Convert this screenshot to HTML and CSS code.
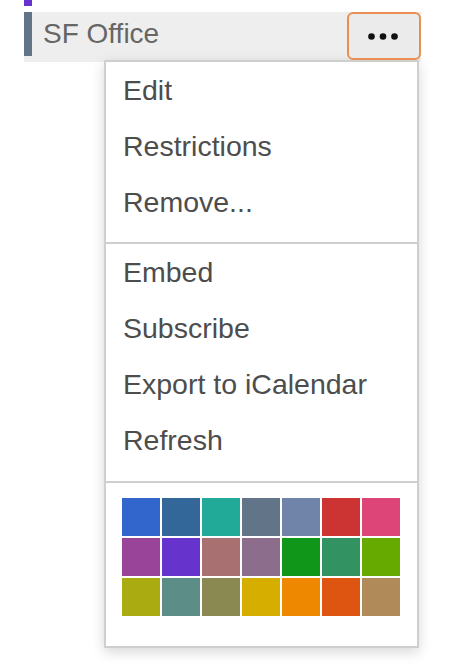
FILE: index.html
```html
<!DOCTYPE html>
<html lang="en">
<head>
<meta charset="utf-8">
<title>SF Office</title>
<link rel="stylesheet" href="styles.css">
</head>
<body>
<div class="page">
  <div class="prev-tick"></div>
  <div class="cal-row">
    <div class="cal-label">SF Office</div>
    <button class="more-btn" type="button" aria-label="More">
      <svg width="30" height="7" viewBox="0 0 30 7"><circle cx="3.5" cy="3.5" r="3.3" fill="#111"/><circle cx="15" cy="3.5" r="3.3" fill="#111"/><circle cx="26.5" cy="3.5" r="3.3" fill="#111"/></svg>
    </button>
  </div>
  <div class="menu">
    <ul class="menu-group">
      <li class="menu-item">Edit</li>
      <li class="menu-item">Restrictions</li>
      <li class="menu-item">Remove...</li>
    </ul>
    <ul class="menu-group menu-group-sep">
      <li class="menu-item">Embed</li>
      <li class="menu-item">Subscribe</li>
      <li class="menu-item">Export to iCalendar</li>
      <li class="menu-item">Refresh</li>
    </ul>
    <div class="palette">
      <span class="sw c1"></span><span class="sw c2"></span><span class="sw c3"></span><span class="sw c4"></span><span class="sw c5"></span><span class="sw c6"></span><span class="sw c7"></span>
      <span class="sw c8"></span><span class="sw c9"></span><span class="sw c10"></span><span class="sw c11"></span><span class="sw c12"></span><span class="sw c13"></span><span class="sw c14"></span>
      <span class="sw c15"></span><span class="sw c16"></span><span class="sw c17"></span><span class="sw c18"></span><span class="sw c19"></span><span class="sw c20"></span><span class="sw c21"></span>
    </div>
  </div>
</div>
</body>
</html>
```
FILE: styles.css
```css
html, body {
  margin: 0;
  padding: 0;
  background: #fff;
}
body {
  font-family: "Liberation Sans", Arial, Helvetica, sans-serif;
}
.page {
  position: relative;
  width: 454px;
  height: 670px;
}
.prev-tick {
  margin-left: 24px;
  width: 8px;
  height: 6px;
  background: #6633cc;
  margin-bottom: 6px;
}
.cal-row {
  margin-left: 24px;
  width: 397px;
  height: 50px;
  background: #eeeeee;
  display: flex;
  align-items: flex-start;
}
.cal-label {
  flex: 1;
  height: 44px;
  border-left: 8px solid #627487;
  padding-left: 11px;
  font-size: 28px;
  line-height: 44px;
  color: #666666;
}
.more-btn {
  box-sizing: border-box;
  width: 74px;
  height: 48px;
  margin: 0;
  padding: 0;
  border: 2px solid #ea8f52;
  border-radius: 6px;
  background: #ebebeb;
  display: flex;
  align-items: center;
  justify-content: center;
  position: relative;
  z-index: 2;
}
.more-btn svg {
  display: block;
  margin-top: 1px;
  margin-left: -3px;
}
.menu {
  position: absolute;
  top: 60px;
  left: 104px;
  width: 311px;
  background: #fff;
  border: 2px solid #cfcfcf;
  box-shadow: 0 4px 12px rgba(0, 0, 0, 0.16);
  z-index: 1;
}
.menu-group {
  list-style: none;
  margin: 0;
  padding: 0 0 12px 0;
}
.menu-group-sep {
  border-top: 2px solid #cfcfcf;
  padding-bottom: 13px;
}
.menu-item {
  height: 56px;
  line-height: 56px;
  padding-left: 17px;
  font-size: 28.5px;
  color: #4d4d4d;
  white-space: nowrap;
}
.palette {
  border-top: 2px solid #cfcfcf;
  padding: 15px 16px 30px 16px;
  display: grid;
  grid-template-columns: repeat(7, 38px);
  grid-auto-rows: 38px;
  gap: 2px;
}
.sw { display: block; }
.c1 { background: #3366cc; }
.c2 { background: #336699; }
.c3 { background: #22aa99; }
.c4 { background: #627487; }
.c5 { background: #7083a8; }
.c6 { background: #cc3333; }
.c7 { background: #dd4477; }
.c8 { background: #994499; }
.c9 { background: #6633cc; }
.c10 { background: #a87070; }
.c11 { background: #8c6d8c; }
.c12 { background: #109618; }
.c13 { background: #329262; }
.c14 { background: #66aa00; }
.c15 { background: #aaaa11; }
.c16 { background: #5c8d87; }
.c17 { background: #898951; }
.c18 { background: #d6ae00; }
.c19 { background: #ee8800; }
.c20 { background: #dd5511; }
.c21 { background: #b08b59; }
```
